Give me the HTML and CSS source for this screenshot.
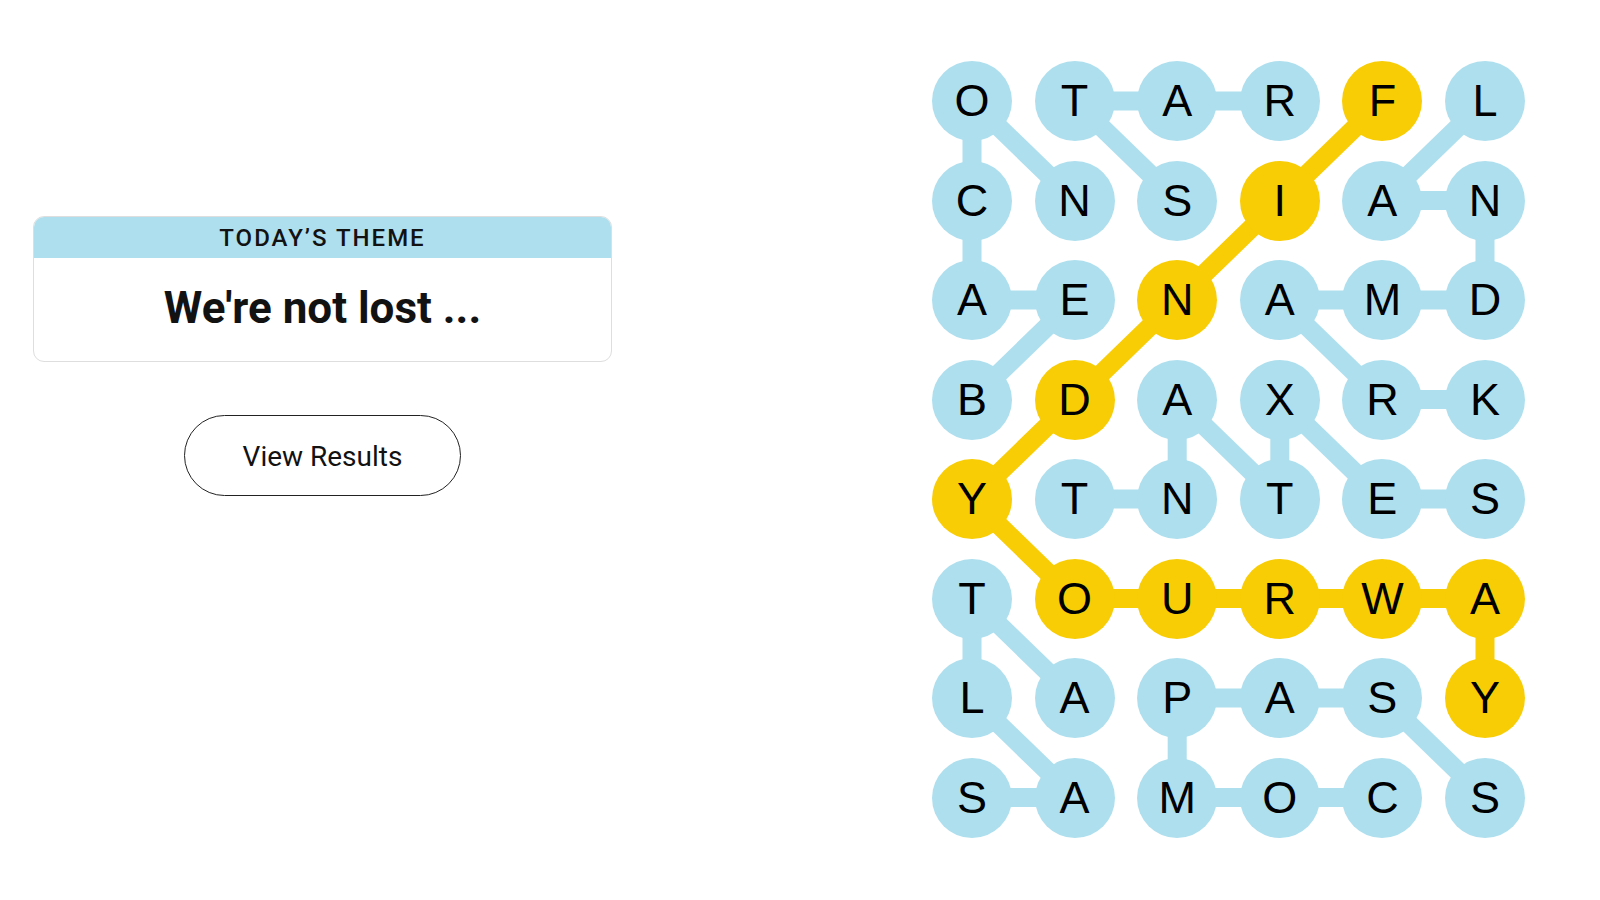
FILE: index.html
```html
<!DOCTYPE html>
<html lang="en">
<head>
<meta charset="utf-8">
<title>Strands</title>
<link rel="stylesheet" href="styles.css">
</head>
<body>
<main class="page">
  <section class="side">
    <div class="theme">
      <div class="theme-head">TODAY’S THEME</div>
      <div class="theme-body">We're not lost ...</div>
    </div>
    <button class="results">View Results</button>
  </section>

  <section class="board">
    <svg class="links" width="593" height="777" viewBox="0 0 593 777" aria-hidden="true">
      <g stroke="#aedfee" stroke-width="19" fill="none">
        <line x1="40" y1="40" x2="40" y2="139.5"/>
        <line x1="40" y1="40" x2="142.6" y2="139.5"/>
        <line x1="142.6" y1="40" x2="245.2" y2="40"/>
        <line x1="142.6" y1="40" x2="245.2" y2="139.5"/>
        <line x1="245.2" y1="40" x2="347.8" y2="40"/>
        <line x1="553" y1="40" x2="450.4" y2="139.5"/>
        <line x1="450.4" y1="139.5" x2="553" y2="139.5"/>
        <line x1="553" y1="139.5" x2="553" y2="239"/>
        <line x1="40" y1="139.5" x2="40" y2="239"/>
        <line x1="40" y1="239" x2="142.6" y2="239"/>
        <line x1="142.6" y1="239" x2="40" y2="338.5"/>
        <line x1="347.8" y1="239" x2="450.4" y2="239"/>
        <line x1="450.4" y1="239" x2="553" y2="239"/>
        <line x1="347.8" y1="239" x2="450.4" y2="338.5"/>
        <line x1="450.4" y1="338.5" x2="553" y2="338.5"/>
        <line x1="245.2" y1="338.5" x2="245.2" y2="438"/>
        <line x1="245.2" y1="338.5" x2="347.8" y2="438"/>
        <line x1="347.8" y1="338.5" x2="347.8" y2="438"/>
        <line x1="347.8" y1="338.5" x2="450.4" y2="438"/>
        <line x1="142.6" y1="438" x2="245.2" y2="438"/>
        <line x1="450.4" y1="438" x2="553" y2="438"/>
        <line x1="40" y1="537.5" x2="40" y2="637"/>
        <line x1="40" y1="537.5" x2="142.6" y2="637"/>
        <line x1="40" y1="637" x2="142.6" y2="736.5"/>
        <line x1="40" y1="736.5" x2="142.6" y2="736.5"/>
        <line x1="245.2" y1="637" x2="347.8" y2="637"/>
        <line x1="347.8" y1="637" x2="450.4" y2="637"/>
        <line x1="245.2" y1="637" x2="245.2" y2="736.5"/>
        <line x1="245.2" y1="736.5" x2="347.8" y2="736.5"/>
        <line x1="347.8" y1="736.5" x2="450.4" y2="736.5"/>
        <line x1="450.4" y1="637" x2="553" y2="736.5"/>
      </g>
      <g stroke="#f8cd05" stroke-width="19" fill="none">
        <line x1="450.4" y1="40" x2="347.8" y2="139.5"/>
        <line x1="347.8" y1="139.5" x2="245.2" y2="239"/>
        <line x1="245.2" y1="239" x2="142.6" y2="338.5"/>
        <line x1="142.6" y1="338.5" x2="40" y2="438"/>
        <line x1="40" y1="438" x2="142.6" y2="537.5"/>
        <line x1="142.6" y1="537.5" x2="553" y2="537.5"/>
        <line x1="553" y1="537.5" x2="553" y2="637"/>
      </g>
    </svg>

    <div class="cell">O</div><div class="cell">T</div><div class="cell">A</div><div class="cell">R</div><div class="cell found">F</div><div class="cell">L</div>
    <div class="cell">C</div><div class="cell">N</div><div class="cell">S</div><div class="cell found">I</div><div class="cell">A</div><div class="cell">N</div>
    <div class="cell">A</div><div class="cell">E</div><div class="cell found">N</div><div class="cell">A</div><div class="cell">M</div><div class="cell">D</div>
    <div class="cell">B</div><div class="cell found">D</div><div class="cell">A</div><div class="cell">X</div><div class="cell">R</div><div class="cell">K</div>
    <div class="cell found">Y</div><div class="cell">T</div><div class="cell">N</div><div class="cell">T</div><div class="cell">E</div><div class="cell">S</div>
    <div class="cell">T</div><div class="cell found">O</div><div class="cell found">U</div><div class="cell found">R</div><div class="cell found">W</div><div class="cell found">A</div>
    <div class="cell">L</div><div class="cell">A</div><div class="cell">P</div><div class="cell">A</div><div class="cell">S</div><div class="cell found">Y</div>
    <div class="cell">S</div><div class="cell">A</div><div class="cell">M</div><div class="cell">O</div><div class="cell">C</div><div class="cell">S</div>
  </section>
</main>
</body>
</html>
```

FILE: styles.css
```css
html, body {
  margin: 0;
  padding: 0;
  background: #ffffff;
}

body {
  font-family: "Liberation Sans", Arial, sans-serif;
  color: #121212;
}

.page {
  display: flex;
  align-items: flex-start;
  height: 900px;
}

.side {
  width: 579px;
  padding: 216px 33px 0;
  display: flex;
  flex-direction: column;
  align-items: center;
  flex-shrink: 0;
}

.theme {
  width: 100%;
  box-sizing: border-box;
  border: 1px solid #dedede;
  border-radius: 11px;
  overflow: hidden;
  background: #fff;
}

.theme-head {
  height: 41px;
  padding-top: 1px;
  box-sizing: border-box;
  background: #aedfee;
  display: flex;
  align-items: center;
  justify-content: center;
  font-family: Roboto, "Liberation Sans", sans-serif;
  font-weight: 500;
  font-size: 24px;
  letter-spacing: 2px;
  color: #121212;
}

.theme-body {
  height: 103px;
  padding-bottom: 4px;
  box-sizing: border-box;
  display: flex;
  align-items: center;
  justify-content: center;
  font-family: Roboto, "Liberation Sans", sans-serif;
  font-weight: 700;
  font-size: 44px;
  color: #121212;
}

.results {
  margin-top: 53px;
  width: 277px;
  height: 81px;
  box-sizing: border-box;
  border: 1.5px solid #222;
  border-radius: 41px;
  background: #fff;
  font-family: Roboto, "Liberation Sans", sans-serif;
  font-size: 28px;
  color: #121212;
  padding: 2px 0 0;
  cursor: pointer;
}

.board {
  position: relative;
  margin: 61px 0 0 287px;
  display: grid;
  grid-template-columns: repeat(6, 80px);
  grid-template-rows: repeat(8, 80px);
  column-gap: 22.6px;
  row-gap: 19.5px;
}

.links {
  position: absolute;
  top: 0;
  left: 0;
  z-index: 0;
}

.cell {
  position: relative;
  z-index: 1;
  width: 80px;
  height: 80px;
  border-radius: 50%;
  background: #aedfee;
  display: flex;
  align-items: center;
  justify-content: center;
  font-family: "Liberation Sans", Arial, sans-serif;
  font-size: 45px;
  color: #000;
}

.cell.found {
  background: #f8cd05;
}
```
